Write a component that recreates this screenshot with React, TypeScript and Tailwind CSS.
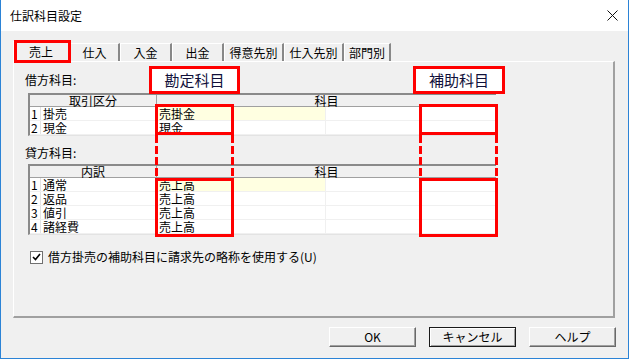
import { Fragment } from 'react'

// 仕訳科目設定 dialog (Win10 classic look) with red annotation boxes on top.

type Row = { no: number; name: string; account: string }

const debitRows: Row[] = [
  { no: 1, name: '掛売', account: '売掛金' },
  { no: 2, name: '現金', account: '現金' },
]

const creditRows: Row[] = [
  { no: 1, name: '通常', account: '売上高' },
  { no: 2, name: '返品', account: '売上高' },
  { no: 3, name: '値引', account: '売上高' },
  { no: 4, name: '諸経費', account: '売上高' },
]

const tabs = [
  { label: '仕入', w: 'w-[50px]' },
  { label: '入金', w: 'w-[52px]' },
  { label: '出金', w: 'w-[52px]' },
  { label: '得意先別', w: 'w-[60px]' },
  { label: '仕入先別', w: 'w-[60px]' },
  { label: '部門別', w: 'w-[47px]' },
]

function Tab({ label, w }: { label: string; w: string }) {
  return (
    <div
      className={`${w} h-[18px] flex items-center justify-center border-t border-l border-white border-r-2 border-r-[#888888] leading-[14px]`}
    >
      {label}
    </div>
  )
}

function GridTable({ head, rows }: { head: string; rows: Row[] }) {
  return (
    <div className="ml-[14px] w-[468px] border-t-2 border-l-2 border-t-[#8a8a8a] border-l-[#8a8a8a] border-b border-b-[#e3e3e3] bg-white">
      <div className="flex h-[12px] bg-[#f0f0f0] border-b border-[#a0a0a0] leading-[11px]">
        <div className="w-[127px] text-center border-r border-[#a0a0a0]">{head}</div>
        <div className="flex-1 text-center">科目</div>
      </div>
      {rows.map((r, i) => (
        <div key={r.no} className="flex h-[14px] border-b border-[#f0f0f0] leading-[13px]">
          <div className="w-[11px] pl-[1px] border-r border-[#e3e3e3]">{r.no}</div>
          <div className="w-[116px] pl-[2px] border-r border-[#f0f0f0]">{r.name}</div>
          <div
            className={`w-[169px] pl-[2px] border-r border-[#f0f0f0] ${i === 0 ? 'bg-[#ffffe1]' : ''}`}
          >
            {r.account}
          </div>
          <div className="w-[94px] border-r border-[#f0f0f0]" />
          <div className="flex-1" />
        </div>
      ))}
    </div>
  )
}

function Button({ label, primary }: { label: string; primary?: boolean }) {
  return (
    <div
      className={`w-[87px] h-[20px] flex items-center justify-center bg-[#f0f0f0] leading-[14px] ${
        primary
          ? 'border border-[#1a1a1a] shadow-[inset_1px_1px_0_#ffffff,inset_-1px_-1px_0_#a0a0a0]'
          : 'border border-t-white border-l-white border-r-[#696969] border-b-[#696969] shadow-[inset_-1px_-1px_0_#a0a0a0]'
      }`}
    >
      {label}
    </div>
  )
}

const dash =
  'bg-[repeating-linear-gradient(to_bottom,#ff0000_0px,#ff0000_8px,transparent_8px,transparent_11px)]'

export default function App() {
  return (
    <div className="relative w-[629px] h-[359px] flex flex-col border-l border-r border-b border-[#2b83d6] bg-[#f0f0f0] font-['Noto_Sans_CJK_JP','Noto_Sans',sans-serif] text-[12px] text-black">
      {/* title bar */}
      <div className="h-[31px] bg-white flex items-center pl-[9px] pr-[8px]">
        <span className="leading-[14px]">仕訳科目設定</span>
        <svg className="ml-auto mr-[2px]" width="11" height="11" viewBox="0 0 11 11">
          <path d="M0.5 0.5 L10.5 10.5 M10.5 0.5 L0.5 10.5" stroke="#111" strokeWidth="1" fill="none" />
        </svg>
      </div>

      {/* tab strip */}
      <div className="mt-[10px] ml-[12px] h-[20px] flex items-end">
        <div className="w-[57px] h-[20px] flex items-center justify-center border-t border-l border-white border-r-2 border-r-[#888888] leading-[14px]">
          売上
        </div>
        {tabs.map((t) => (
          <Tab key={t.label} label={t.label} w={t.w} />
        ))}
      </div>

      {/* tab panel */}
      <div className="ml-[12px] w-[602px] h-[257px] flex flex-col border-t border-l border-white border-r-2 border-b-2 border-r-[#a0a0a0] border-b-[#a0a0a0]">
        <div className="ml-[11px] mt-[11px] h-[14px] leading-[14px]">借方科目:</div>
        <div className="mt-[6px]">
          <GridTable head="取引区分" rows={debitRows} />
        </div>
        <div className="ml-[11px] mt-[10px] h-[14px] leading-[14px]">貸方科目:</div>
        <div className="mt-[4px]">
          <GridTable head="内訳" rows={creditRows} />
        </div>
        <div className="mt-[15px] ml-[16px] h-[14px] flex items-center gap-[5px]">
          <div className="w-[13px] h-[13px] bg-white border border-[#707070] flex items-center justify-center">
            <svg width="9" height="8" viewBox="0 0 9 8">
              <path d="M1 4 L3.5 6.5 L8 1" stroke="#000" strokeWidth="1.6" fill="none" />
            </svg>
          </div>
          <span className="leading-[14px]">借方掛売の補助科目に請求先の略称を使用する(U)</span>
        </div>
      </div>

      {/* buttons */}
      <div className="mt-[9px] pr-[12px] flex justify-end gap-[13px]">
        <Button label="OK" />
        <Button label="キャンセル" primary />
        <Button label="ヘルプ" />
      </div>

      {/* red annotations */}
      <div className="absolute left-[13px] top-[40px] w-[57px] h-[23px] border-[3px] border-[#ff0000]" />
      <div className="absolute left-[148px] top-[66px] w-[91px] h-[28px] border-[3px] border-[#ff0000] bg-white flex items-center justify-center text-[15px] leading-[18px] text-[#10103a]">
        勘定科目
      </div>
      <div className="absolute left-[412px] top-[66px] w-[92px] h-[28px] border-[3px] border-[#ff0000] bg-white flex items-center justify-center text-[15px] leading-[18px] text-[#10103a]">
        補助科目
      </div>
      {[154, 418].map((x) => (
        <Fragment key={x}>
          <div
            className="absolute top-[104px] w-[79px] h-[31px] border-[3px] border-[#ff0000]"
            style={{ left: x }}
          />
          <div className={`absolute top-[135px] w-[3px] h-[43px] ${dash}`} style={{ left: x }} />
          <div className={`absolute top-[135px] w-[3px] h-[43px] ${dash}`} style={{ left: x + 76 }} />
          <div
            className="absolute top-[178px] w-[79px] h-[59px] border-[3px] border-[#ff0000]"
            style={{ left: x }}
          />
        </Fragment>
      ))}
    </div>
  )
}
